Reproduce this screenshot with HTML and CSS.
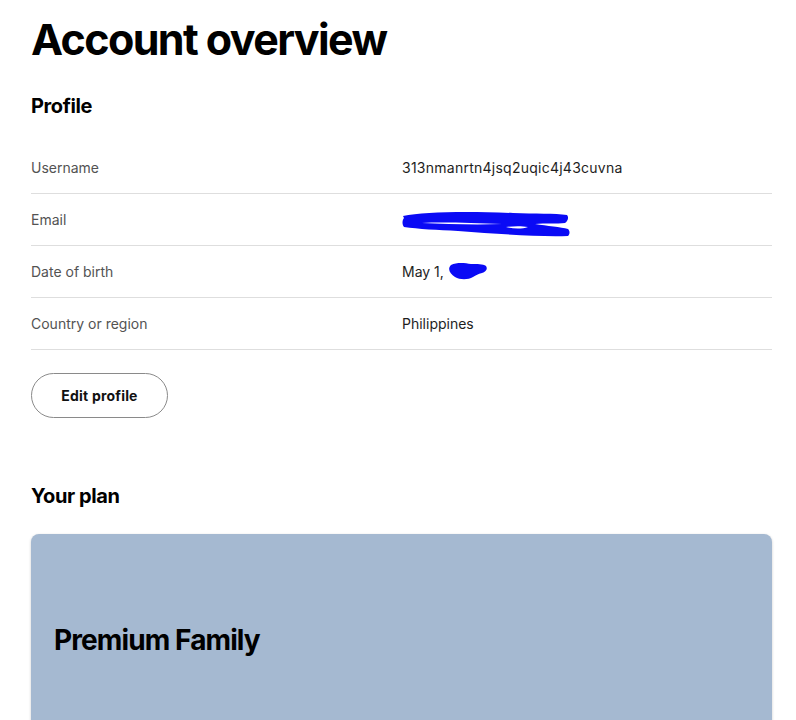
FILE: index.html
```html
<html>
  <head>
    <meta name="viewport" content="width=device-width, initial-scale=1.0">
    <title>Account overview</title>
    <link rel="stylesheet" href="styles.css">
  </head>
  <body>
    <main class="page">
      <h1 class="title">Account overview</h1>

      <section class="profile">
        <h2 class="section-title">Profile</h2>
        <div class="rows">
          <div class="row">
            <span class="label">Username</span>
            <span class="value username">313nmanrtn4jsq2uqic4j43cuvna</span>
          </div>
          <div class="row">
            <span class="label">Email</span>
            <span class="value">
              <svg class="scribble" viewBox="0 0 168 28" width="168" height="28">
                <path fill="#0a0af5" d="M1 6c20-4 60-5 110-3 22 1 42 0 54 2 2 2 1 6-2 8-8 1-20 0-30 1 12 2 26 3 33 5 2 2 2 5 0 7-30 1-70-2-110-5-20-1-40-2-54-4-2-2-2-7 0-9z"/>
                <path fill="#ffffff" d="M20 13c20-1 50 0 80 1-28 1-56 0-80-1z M104 17c8-1 16-1 22 0-6 2-14 2-22 0z"/>
              </svg>
            </span>
          </div>
          <div class="row">
            <span class="label">Date of birth</span>
            <span class="value">May 1,
              <svg class="scribble-small" viewBox="0 0 40 20" width="40" height="20">
                <path fill="#0a0af5" d="M3 4c6-3 14-2 20-1 6 0 12 0 15 2 2 3 0 6-4 7-4 1-6 2-9 4-5 3-13 3-18 0-5-3-8-8-4-12z"/>
              </svg>
            </span>
          </div>
          <div class="row">
            <span class="label">Country or region</span>
            <span class="value">Philippines</span>
          </div>
        </div>
        <button class="edit-button">Edit profile</button>
      </section>

      <section class="plan">
        <h2 class="section-title">Your plan</h2>
        <div class="plan-card">
          <h3 class="plan-name">Premium Family</h3>
        </div>
      </section>
    </main>
  </body>
</html>
```

FILE: styles.css
```css
html, body {
  margin: 0;
  background: #ffffff;
}
body {
  font-family: Inter, "Noto Sans", sans-serif;
  color: #000000;
  overflow: hidden;
}
.page {
  width: 741px;
  padding: 0 0 0 31px;
}
.title {
  margin: 0;
  padding-top: 13px;
  font-size: 43px;
  font-weight: 700;
  letter-spacing: -1.6px;
  line-height: 52px;
}
.section-title {
  margin: 0;
  font-size: 20px;
  font-weight: 700;
  letter-spacing: -0.4px;
  line-height: 28px;
}
.profile .section-title {
  margin-top: 27px;
}
.rows {
  margin-top: 22px;
}
.row {
  display: grid;
  grid-template-columns: 371px 1fr;
  align-items: center;
  height: 51px;
  border-bottom: 1px solid #dedede;
  font-size: 14px;
}
.label {
  color: #535353;
}
.value {
  color: #1e1e1e;
  display: flex;
  align-items: center;
  gap: 4px;
}
.username {
  letter-spacing: 0.25px;
}
.scribble {
  margin-top: 8px;
}
.scribble-small {
  margin-top: -1px;
}
.edit-button {
  margin-top: 23px;
  width: 137px;
  height: 45px;
  border: 1px solid #8a8a8a;
  border-radius: 23px;
  background: #ffffff;
  font-family: inherit;
  font-size: 14px;
  font-weight: 700;
  letter-spacing: 0.2px;
  color: #111111;
  cursor: pointer;
}
.plan .section-title {
  margin-top: 64px;
}
.plan-card {
  margin-top: 24px;
  height: 220px;
  background: #a5b9d1;
  border-radius: 8px;
  box-shadow: 0 1px 3px rgba(0, 0, 0, 0.2);
  padding: 88px 23px 0;
  box-sizing: border-box;
}
.plan-name {
  margin: 0;
  font-size: 28px;
  font-weight: 700;
  letter-spacing: -0.9px;
  line-height: 36px;
}
```
